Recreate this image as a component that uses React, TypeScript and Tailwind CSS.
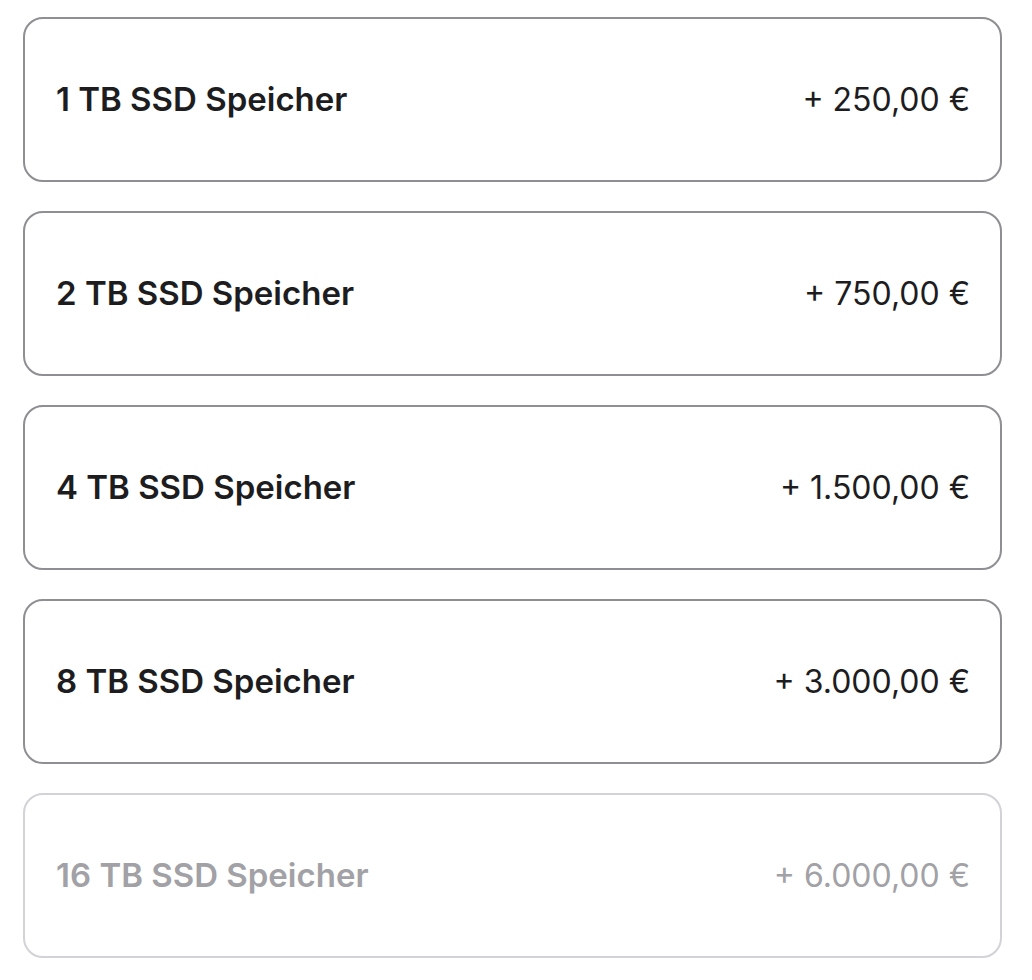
const options = [
  { label: '1 TB SSD Speicher', price: '+ 250,00 €', disabled: false },
  { label: '2 TB SSD Speicher', price: '+ 750,00 €', disabled: false },
  { label: '4 TB SSD Speicher', price: '+ 1.500,00 €', disabled: false },
  { label: '8 TB SSD Speicher', price: '+ 3.000,00 €', disabled: false },
  { label: '16 TB SSD Speicher', price: '+ 6.000,00 €', disabled: true },
];

export default function App() {
  return (
    <div className="min-h-[980px] bg-white pt-[17px] pl-[23px] pr-[30px]" style={{ fontFamily: 'Inter, "Liberation Sans", sans-serif' }}>
      <div className="flex flex-col gap-[29px]">
        {options.map((o) => (
          <div
            key={o.label}
            className={
              o.disabled
                ? 'flex h-[165px] items-center justify-between rounded-[20px] border-2 border-[#d2d2d7] pl-[31px] pr-[30px] text-[#a1a1a6]'
                : 'flex h-[165px] items-center justify-between rounded-[20px] border-2 border-[#8e8e93] pl-[31px] pr-[30px] text-[#1d1d1f]'
            }
          >
            <span className="text-[33px] font-semibold">{o.label}</span>
            <span className="text-[32px] font-normal">{o.price}</span>
          </div>
        ))}
      </div>
    </div>
  );
}
